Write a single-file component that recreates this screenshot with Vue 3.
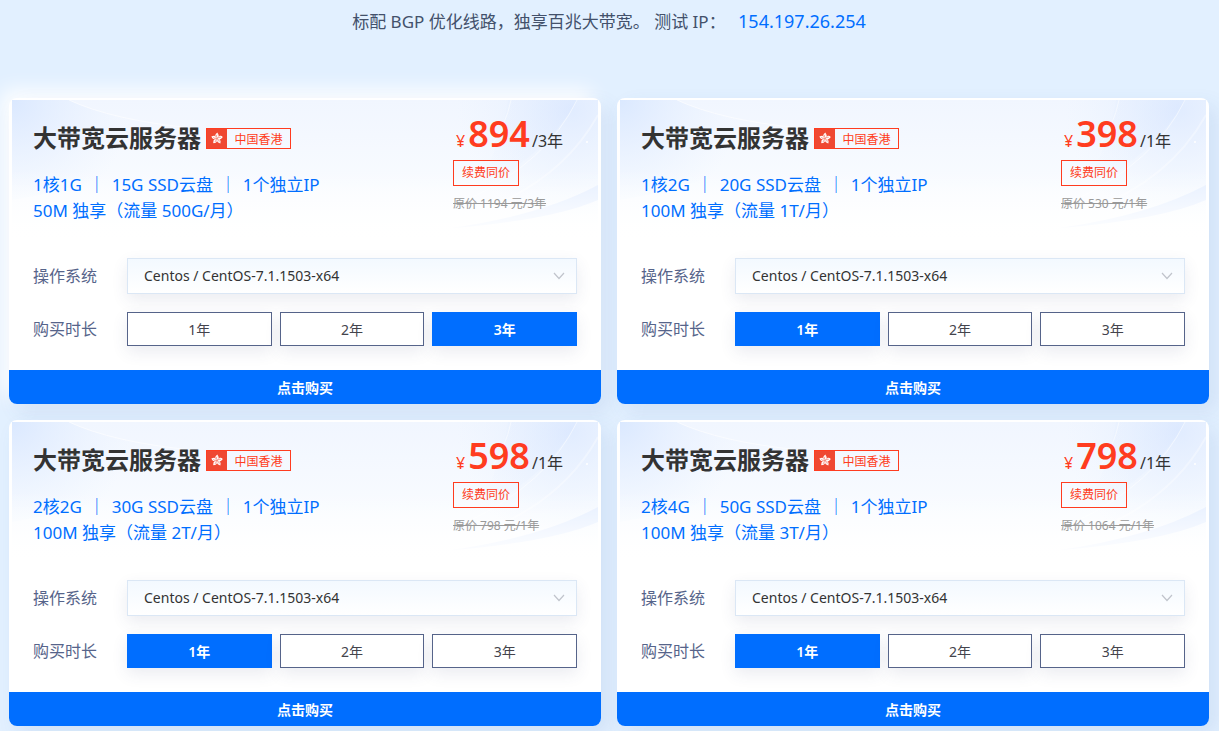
<script setup>
import { reactive } from 'vue'

const terms = ['1年', '2年', '3年']
const plans = reactive([
  { spec: ['1核1G', '15G SSD云盘', '1个独立IP'], band: '50M 独享（流量 500G/月）', price: 894, old: 1194, term: '3年' },
  { spec: ['1核2G', '20G SSD云盘', '1个独立IP'], band: '100M 独享（流量 1T/月）', price: 398, old: 530, term: '1年' },
  { spec: ['2核2G', '30G SSD云盘', '1个独立IP'], band: '100M 独享（流量 2T/月）', price: 598, old: 798, term: '1年' },
  { spec: ['2核4G', '50G SSD云盘', '1个独立IP'], band: '100M 独享（流量 3T/月）', price: 798, old: 1064, term: '1年' }
])
const petals = [0, 72, 144, 216, 288]
</script>

<template>
  <main class="page">
    <p class="intro">标配 BGP 优化线路，独享百兆大带宽。 测试 IP： <a href="#">154.197.26.254</a></p>
    <div class="grid">
      <article v-for="(p, i) in plans" :key="i" class="card" :class="{ lit: i === 0 }">
        <header class="head">
          <svg class="art" viewBox="0 0 586 140" preserveAspectRatio="none" aria-hidden="true">
            <defs>
              <linearGradient :id="'base' + i" x1="0" y1="0" x2="0" y2="1">
                <stop offset="0" stop-color="#f1f6ff" />
                <stop offset="0.6" stop-color="#f8fbff" />
                <stop offset="1" stop-color="#ffffff" />
              </linearGradient>
              <radialGradient :id="'left' + i" gradientUnits="userSpaceOnUse" cx="0" cy="0" r="120">
                <stop offset="0" stop-color="#d5e5ff" />
                <stop offset="1" stop-color="#e6f0ff" stop-opacity="0" />
              </radialGradient>
              <radialGradient :id="'right' + i" gradientUnits="userSpaceOnUse" cx="560" cy="10" r="115">
                <stop offset="0" stop-color="#d6e5ff" />
                <stop offset="1" stop-color="#e6f0ff" stop-opacity="0" />
              </radialGradient>
              <linearGradient :id="'fade' + i" x1="0" y1="0" x2="0" y2="1">
                <stop offset="0.5" stop-color="#ffffff" stop-opacity="0" />
                <stop offset="1" stop-color="#ffffff" />
              </linearGradient>
            </defs>
            <rect width="586" height="140" :fill="'url(#base' + i + ')'" />
            <path d="M0 0H57Q100 20 180 28Q120 80 0 100Z" :fill="'url(#left' + i + ')'" opacity=".8" />
            <path d="M440 0H586V140H440Z" :fill="'url(#right' + i + ')'" opacity=".6" />
            <path d="M496 0H565Q535 55 465 90Q490 40 496 0Z" :fill="'url(#right' + i + ')'" opacity=".4" />
            <path d="M586 85V100Q540 120 440 128Q530 115 586 85Z" fill="#dbe8ff" opacity=".6" />
            <g fill="none" stroke="#ffffff">
              <path d="M565 0Q535 62 455 100" stroke-opacity=".5" />
              <path d="M586 15Q550 80 470 110" stroke-width="2" stroke-opacity=".35" />
              <path d="M499 0Q494 25 478 48" stroke-opacity=".5" />
              <path d="M57 0Q100 20 180 28" stroke-opacity=".6" />
            </g>
            <circle cx="575" cy="42" r="1" fill="#ffffff" />
            <rect width="586" height="140" :fill="'url(#fade' + i + ')'" />
          </svg>
          <div class="info">
            <div class="name">
              <h2>大带宽云服务器</h2>
              <span class="region">
                <svg class="flag" viewBox="0 0 20 20" aria-hidden="true">
                  <g v-for="a in petals" :key="a" :transform="'rotate(' + a + ' 10 10)'">
                    <path d="M10 9.600C7.800 8.600 7.300 5.400 10.600 3.600C10.200 4.900 12.300 5.500 11.700 7.200C11.400 8.200 10.500 8.700 10 9.600Z" fill="#fff" />
                    <path d="M10 9C9.300 8 9.300 7 10 6" fill="none" stroke="#ef4832" stroke-width=".6" />
                  </g>
                </svg>
                <span class="place">中国香港</span>
              </span>
            </div>
            <p class="spec">
              <template v-for="(s, n) in p.spec" :key="s"><span v-if="n" class="bar"> ｜ </span>{{ s }}</template><br>{{ p.band }}
            </p>
          </div>
          <div class="cost">
            <div class="price"><span class="yen">¥</span><strong>{{ p.price }}</strong><span class="per">/{{ p.term }}</span></div>
            <span class="same">续费同价</span>
            <del>原价 {{ p.old }} 元/{{ p.term }}</del>
          </div>
        </header>
        <div class="form">
          <label class="label" :for="'os' + i">操作系统</label>
          <div class="picker">
            <select :id="'os' + i"><option>Centos / CentOS-7.1.1503-x64</option></select>
            <svg class="chevron" viewBox="0 0 12 8" aria-hidden="true"><path d="M1 1L6 6.500L11 1" fill="none" stroke="#c0c4cc" stroke-width="1.2" /></svg>
          </div>
          <span :id="'term' + i" class="label">购买时长</span>
          <div class="terms" role="group" :aria-labelledby="'term' + i">
            <button v-for="t in terms" :key="t" type="button" :class="{ on: t === p.term }" :aria-pressed="t === p.term" @click="p.term = t">{{ t }}</button>
          </div>
        </div>
        <button type="button" class="buy">点击购买</button>
      </article>
    </div>
  </main>
</template>

<style>
body { margin: 0; background: #e2f0ff; }
</style>

<style scoped>
* { box-sizing: border-box; }
.page {
  padding: 7px 10px 6px 9px;
  font-family: "Noto Sans", "Noto Sans CJK SC", sans-serif;
  overflow: hidden;
}
.intro { margin: 0 0 62px; font-size: 17px; line-height: 28px; text-align: center; color: #43516b; }
.intro a { color: #006eff; text-decoration: none; margin-left: 8px; font-size: 18px; }
.grid { display: grid; grid-template-columns: 1fr 1fr; gap: 16px; }
.card {
  display: flex;
  flex-direction: column;
  background: #fff;
  border-radius: 8px;
  box-shadow: 8px 8px 20px rgba(55, 99, 170, 0.1);
}
.card.lit { box-shadow: 8px 8px 20px rgba(55, 99, 170, 0.1), -8px -8px 20px #fff; }
.head {
  position: relative;
  display: flex;
  justify-content: space-between;
  height: 140px;
  margin: 2px 3px 0;
  padding: 0 21px;
}
.art { position: absolute; inset: 0; width: 100%; height: 100%; }
.info, .cost { position: relative; }
.info { padding-top: 21px; }
.name { display: flex; align-items: center; gap: 5px; }
h2 { margin: 0; font-size: 24px; line-height: 34px; font-weight: 700; color: #333; }
.region { display: flex; width: 85px; height: 21px; border: 1px solid #ff3c20; }
.flag { width: 20px; height: 19px; background: #ef4832; }
.place { flex: 1; font-size: 12px; line-height: 21px; text-align: center; color: #ff3c20; }
.spec { margin: 17px 0 0; font-size: 17px; line-height: 26px; color: #006eff; white-space: nowrap; }
.bar { margin: 0 2px; font-weight: 500; white-space: pre; }
.cost { width: 124px; padding-top: 10px; display: flex; flex-direction: column; align-items: flex-start; white-space: nowrap; }
.price { height: 50px; line-height: 48px; color: #ff3c20; padding-left: 3px; }
.price strong { font-size: 36px; font-weight: 600; margin-right: 2px; }
.yen { font-size: 16px; margin-right: 3px; }
.per { font-size: 16px; color: #333; }
.same { border: 1px solid #ff3c20; color: #ff3c20; font-size: 12px; line-height: 24px; padding: 0 8px; }
del { margin-top: 8px; font-size: 12px; line-height: 20px; color: #999; }
.form {
  display: grid;
  grid-template-columns: 94px 1fr;
  row-gap: 18px;
  align-items: center;
  padding: 18px 24px 24px;
}
.label { font-size: 16px; padding-bottom: 2px; color: #56648a; }
.picker { position: relative; }
select {
  display: block;
  width: 100%;
  height: 36px;
  padding: 0 32px 2px 16px;
  appearance: none;
  border: 1px solid #dbe7f5;
  border-radius: 0;
  background: linear-gradient(#f3f9ff, #fff);
  box-shadow: 0 6px 16px rgba(55, 70, 120, 0.1);
  font: 14px "Noto Sans", "Noto Sans CJK SC", sans-serif;
  color: #333;
}
.chevron { position: absolute; right: 12px; top: 14px; width: 12px; height: 8px; pointer-events: none; }
.terms { display: grid; grid-template-columns: repeat(3, 1fr); gap: 8px; }
button { font-family: inherit; font-size: 14px; padding: 0; cursor: pointer; }
.terms button {
  height: 34px;
  border: 1px solid #56648a;
  background: #fff;
  color: #44444c;
  box-shadow: 0 6px 16px rgba(55, 70, 120, 0.1);
}
.terms .on { background: #006eff; border-color: #006eff; color: #fff; font-weight: 600; }
.buy { height: 34px; border: 0; border-radius: 0 0 8px 8px; background: #006eff; color: #fff; font-weight: 600; }
</style>
